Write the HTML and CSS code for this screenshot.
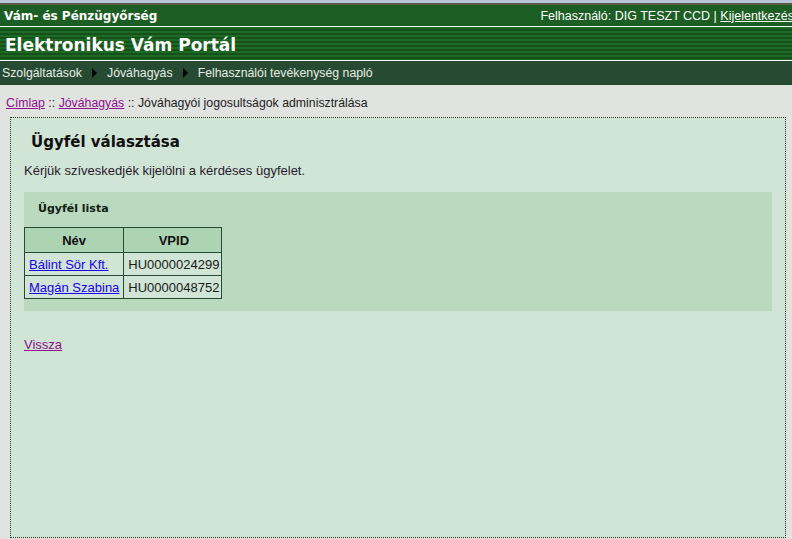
FILE: index.html
```html
<!DOCTYPE html>
<html lang="hu">
<head>
    <meta charset="UTF-8">
    <title>Elektronikus Vám Portál</title>
    <link rel="stylesheet" href="styles.css">
</head>
<body>
    <div class="topline"></div>
    <div class="orgbar">
        <span class="org">Vám- és Pénzügyőrség</span>
        <span class="user">Felhasználó: DIG TESZT CCD | <a href="#">Kijelentkezés</a></span>
    </div>
    <div class="portal">Elektronikus Vám Portál</div>
    <div class="menu">
        <span>Szolgáltatások</span>
        <span class="arrow"></span>
        <span>Jóváhagyás</span>
        <span class="arrow"></span>
        <span>Felhasználói tevékenység napló</span>
    </div>

    <div class="crumbs">
        <a href="#">Címlap</a> :: <a href="#">Jóváhagyás</a> :: Jóváhagyói jogosultságok adminisztrálása
    </div>

    <div class="content">
        <h1>Ügyfél választása</h1>
        <p class="intro">Kérjük szíveskedjék kijelölni a kérdéses ügyfelet.</p>

        <div class="panel">
            <h2>Ügyfél lista</h2>
            <table class="list">
                <tr>
                    <th>Név</th>
                    <th>VPID</th>
                </tr>
                <tr>
                    <td><a class="client" href="#">Bálint Sör Kft.</a></td>
                    <td>HU0000024299</td>
                </tr>
                <tr>
                    <td><a class="client" href="#">Magán Szabina</a></td>
                    <td>HU0000048752</td>
                </tr>
            </table>
        </div>

        <a class="back" href="#">Vissza</a>
    </div>
</body>
</html>
```

FILE: styles.css
```css
html, body {
    height: 100%;
}
body {
    margin: 0;
    background-color: #e1e3e1;
    font-family: "Liberation Sans", Arial, sans-serif;
    font-size: 12px;
    display: flex;
    flex-direction: column;
}
.topline {
    height: 3px;
    background-color: #b9c6d9;
    border-bottom: 2px solid #5d5a44;
}
.orgbar {
    height: 21px;
    background-color: #1d5e24;
    border-bottom: 1px solid #ffffff;
    color: #ffffff;
    display: flex;
    align-items: center;
    justify-content: space-between;
    white-space: nowrap;
    overflow: hidden;
}
.org {
    font-family: "DejaVu Sans", Verdana, sans-serif;
    font-weight: bold;
    font-size: 12px;
    padding-left: 4px;
}
.user {
    font-size: 12.5px;
    margin-right: -2px;
}
.user a {
    color: #ffffff;
}
.portal {
    height: 33px;
    background: repeating-linear-gradient(to bottom, #1e6a25 0, #1e6a25 2px, #15521b 2px, #15521b 4px);
    border-bottom: 1px solid #ffffff;
    color: #ffffff;
    font-family: "DejaVu Sans", Verdana, sans-serif;
    font-weight: bold;
    font-size: 17px;
    line-height: 36px;
    padding-left: 5px;
}
.menu {
    height: 24px;
    background-color: #274b32;
    color: #e6ece6;
    display: flex;
    align-items: center;
    gap: 8px;
    padding-left: 2px;
    font-size: 12.3px;
}
.arrow {
    width: 0;
    height: 0;
    border-top: 5px solid transparent;
    border-bottom: 5px solid transparent;
    border-left: 5px solid #000000;
    margin: 0 2px;
}
.crumbs {
    padding: 11px 6px 7px;
    color: #222222;
    font-size: 12.3px;
}
.crumbs a {
    color: #8e0e8e;
}
.content {
    flex: 1;
    margin: 0 6px 1px 10px;
    border: 1px dotted #2a3a2a;
    background-color: #d0e5d5;
    padding: 0 13px 0 13px;
}
.content h1 {
    font-family: "DejaVu Sans", Verdana, sans-serif;
    font-size: 15px;
    margin: 15px 0 0 7px;
    color: #101010;
}
.intro {
    margin: 12px 0 14px 0;
    color: #2a1a30;
    font-size: 13px;
}
.panel {
    background-color: #bad9bf;
    padding: 10px 0 12px 0;
}
.panel h2 {
    font-family: "DejaVu Sans", Verdana, sans-serif;
    font-size: 11px;
    margin: 0 0 12px 14px;
    color: #102010;
}
.list {
    border-collapse: collapse;
    background-color: #d0e5d5;
}
.list th, .list td {
    border: 1px solid #274b32;
    font-size: 13px;
    padding: 0 4px;
}
.list td + td, .list th + th {
    padding: 0 2px 0 4px;
}
.list th {
    background-color: #acd3b2;
    height: 24px;
    color: #101010;
    font-family: "Liberation Sans", Arial, sans-serif;
}
.list td {
    height: 22px;
    color: #1a1a1a;
}
.client {
    color: #1a00ee;
}
.back {
    display: inline-block;
    margin-top: 26px;
    color: #8e0e8e;
    font-size: 13px;
}
```
